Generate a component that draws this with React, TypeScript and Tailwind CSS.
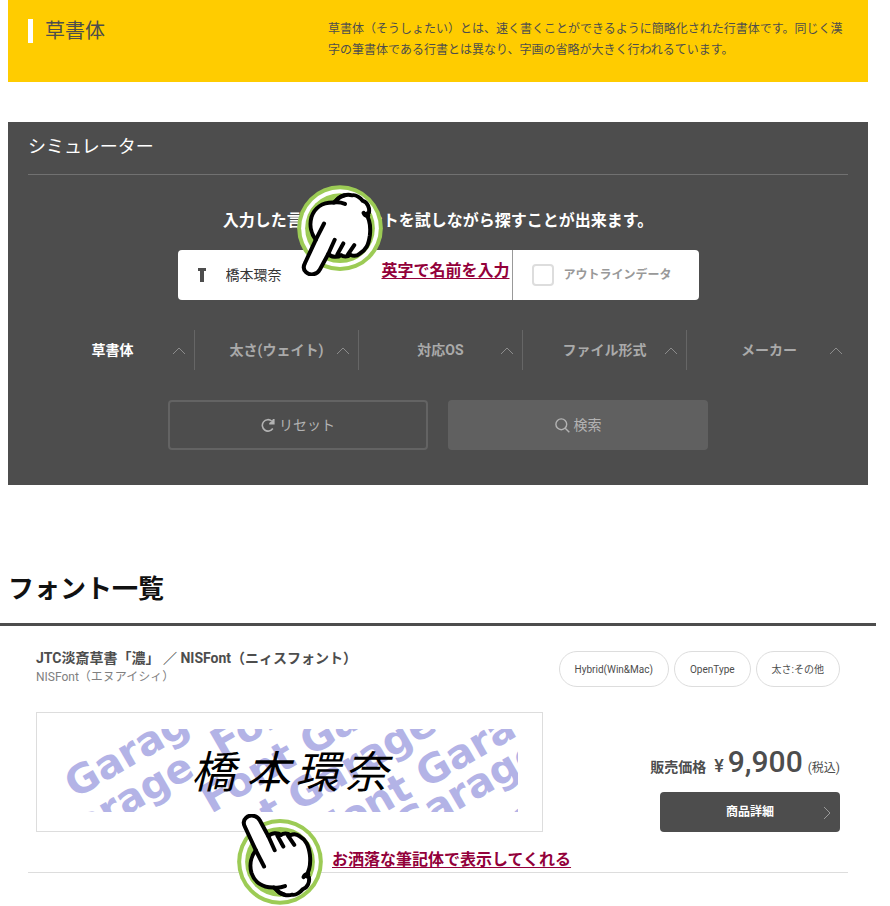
import { useState } from "react";

const filters = ["草書体", "太さ(ウェイト)", "対応OS", "ファイル形式", "メーカー"];
const tags = ["Hybrid(Win&Mac)", "OpenType", "太さ:その他"];

const watermarks = [
  { x: 10, y: 70, text: "Garag" },
  { x: -9, y: 127, text: "Garage" },
  { x: 156, y: 30, text: "Font" },
  { x: 146, y: 85, text: "Font Garage" },
  { x: 134, y: 140, text: "Font Garage" },
  { x: 262, y: 117, text: "Font Garage" },
  { x: 340, y: 112, text: "Garage" },
  { x: 336, y: 173, text: "Garage" },
];

function PointingHand({ className }: { className: string }) {
  return (
    <svg viewBox="0 0 258 274" className={className} fill="none" aria-hidden="true">
      <circle cx="129" cy="130" r="129" fill="#9ccb55" />
      <circle cx="129" cy="130" r="117" fill="#fff" />
      <circle cx="129" cy="130" r="105" fill="#9ccb55" />
      <g stroke="#000" strokeWidth="12" strokeLinecap="round" strokeLinejoin="round">
        <path
          fill="#fff"
          d="M56 165C43 148 36 122 43 97C52 70 75 52 110 53L119 45C130 31 151 26 166 31C176 28 191 39 198 48C212 52 219 69 216 84L207 87C217 101 222 123 219 151C215 181 207 196 188 207C179 215 168 214 160 210C152 217 139 217 132 211C122 219 102 218 94 207L68 255C60 271 38 273 27 263C19 256 18 245 24 234Z"
        />
        <path d="M81 116L56 165M113 165L94 207M139 176L121 209M172 181L153 209M110 53Q126 50 144 57M119 45Q128 34 142 32M200 84Q204 94 214 92" />
      </g>
    </svg>
  );
}

function ChevronUp() {
  return (
    <svg viewBox="0 0 14 8" className="absolute right-2 top-[17px] h-2 w-[14px]" fill="none" stroke="#8c8c8c" aria-hidden="true">
      <path d="M1 7L7 1L13 7" />
    </svg>
  );
}

export default function App() {
  const [name, setName] = useState("橋本環奈");
  const [active, setActive] = useState(0);

  return (
    <main className="min-h-[906px] bg-white pr-[14px] font-[Roboto,'Noto_Sans_CJK_JP',sans-serif] text-[#4d4d4d]">
      <section className="mx-2 flex h-[82px] justify-between bg-[#ffcc00] px-5 pt-[19px]">
        <h1 className="flex h-6 items-center gap-3 text-xl leading-6">
          <span className="h-6 w-[5px] bg-white" />
          草書体
        </h1>
        <p className="w-[520px] text-xs leading-[21px]">
          草書体（そうしょたい）とは、速く書くことができるように簡略化された行書体です。同じく漢字の筆書体である行書とは異なり、字画の省略が大きく行われるています。
        </p>
      </section>

      <section className="mx-2 mt-10 bg-[#4d4d4d] pb-[35px]">
        <h2 className="mx-5 h-[53px] border-b border-[#717171] pt-[13px] text-lg leading-6 text-white">シミュレーター</h2>
        <p className="pt-[34px] text-center text-base font-bold leading-6 text-white">
          <span className="relative">
            入力した言葉でフォントを試しながら探すことが出来ます。
            <PointingHand className="absolute left-[74px] top-[-26px] z-10 h-[91px] w-[86px]" />
          </span>
        </p>

        <div className="mx-auto mt-[17px] flex h-[50px] w-[521px] overflow-hidden rounded bg-white">
          <label className="relative flex w-[335px] items-center border-r border-[#999] pl-[19px]">
            <svg viewBox="0 0 10 14" className="h-[14px] w-[10px] shrink-0" fill="#4d4d4d" aria-hidden="true">
              <path d="M1 0H9V3H7V14H3V3H1Z" />
            </svg>
            <input
              aria-label="文字を入力"
              value={name}
              onChange={(e) => setName(e.target.value)}
              className="ml-[19px] w-[150px] text-sm text-[#333] outline-none"
            />
            <span className="absolute right-[2px] top-[9px] text-base font-bold leading-6 text-[#93003a] underline underline-offset-2">
              英字で名前を入力
            </span>
          </label>
          <label className="flex items-center gap-[10px] pl-[19px] text-xs font-bold text-[#999]">
            <input type="checkbox" className="h-[22px] w-[22px] appearance-none rounded border-2 border-[#ddd] bg-white checked:bg-[#ddd]" />
            アウトラインデータ
          </label>
        </div>

        <div className="mt-[30px] grid grid-cols-5 pl-[23px] pr-[17px]">
          {filters.map((label, i) => (
            <button
              key={label}
              type="button"
              onClick={() => setActive(i)}
              className={`relative h-10 border-[#666] text-sm font-bold ${i < 4 ? "border-r" : ""} ${i === active ? "text-white" : "text-[#aaa]"}`}
            >
              {label}
              <ChevronUp />
            </button>
          ))}
        </div>

        <div className="mt-[30px] flex justify-center gap-5 text-sm text-[#b3b3b3]">
          <button type="reset" className="flex h-[50px] w-[260px] items-center justify-center gap-1 rounded border-2 border-[#636363]">
            <svg viewBox="0 0 14 14" className="h-[14px] w-[14px]" fill="none" stroke="currentColor" strokeWidth="1.6" aria-hidden="true">
              <path d="M11.8 10.5A5.7 5.7 0 1 1 10.7 3" />
              <path d="M13.6 1V6.4H8.2V5L10.5 3.2L12 1Z" fill="currentColor" stroke="none" />
            </svg>
            リセット
          </button>
          <button type="submit" className="flex h-[50px] w-[260px] items-center justify-center gap-1 rounded bg-[#606060]">
            <svg viewBox="0 0 15 15" className="h-[15px] w-[15px]" fill="none" stroke="currentColor" strokeWidth="1.4" aria-hidden="true">
              <circle cx="6.3" cy="6.3" r="5.4" />
              <path d="M10.2 10.2L14.3 14.3" />
            </svg>
            検索
          </button>
        </div>
      </section>

      <section className="pt-[82px]">
        <h2 className="h-[56px] pl-2 pt-[6px] text-[26px] font-bold leading-8 text-[#111]">フォント一覧</h2>
        <div className="h-[3px] bg-[#4d4d4d]" />
        <article className="relative mx-7 h-[247px] border-b border-[#ddd] px-2 pt-[22px]">
          <div className="flex justify-between">
            <div>
              <h3 className="text-sm font-bold leading-5">JTC淡斎草書「濃」 ／ NISFont（ニィスフォント）</h3>
              <p className="text-xs leading-[18px] text-[#808080]">NISFont（エヌアイシィ）</p>
            </div>
            <ul className="mt-[3px] flex gap-[5px]">
              {tags.map((tag) => (
                <li key={tag} className="flex h-9 items-center rounded-full border border-[#ddd] px-[15px] text-[10px]">
                  {tag}
                </li>
              ))}
            </ul>
          </div>

          <div className="mt-[25px] flex justify-between">
            <div className="h-[120px] w-[507px] border border-[#ddd] pl-7 pt-4">
              <svg viewBox="0 0 453 83" className="h-[83px] w-[453px]">
                {watermarks.map((mark, i) => (
                  <text
                    key={i}
                    transform={`translate(${mark.x} ${mark.y}) rotate(-30)`}
                    className="fill-[#b3b3e6] font-['DejaVu_Sans',sans-serif] text-[40px] font-bold"
                  >
                    {mark.text}
                  </text>
                ))}
                <text x="126 181 230 279" y="59" className="fill-black font-['Noto_Sans_CJK_JP',sans-serif] text-[44px] italic">
                  {name}
                </text>
              </svg>
            </div>
            <div className="flex flex-col items-end pt-[30px]">
              <p className="flex h-[50px] items-baseline font-bold">
                <span className="text-sm">販売価格</span>
                <span className="ml-2 text-lg font-medium">¥</span>
                <span className="ml-1 text-[30px] font-medium leading-10">9,900</span>
                <span className="ml-[5px] text-xs font-normal">(税込)</span>
              </p>
              <a href="#detail" className="relative flex h-10 w-[180px] items-center justify-center rounded-sm bg-[#4d4d4d] text-xs font-bold text-white">
                商品詳細
                <svg viewBox="0 0 8 14" className="absolute right-[9px] top-[14px] h-[14px] w-2" fill="none" stroke="#999" aria-hidden="true">
                  <path d="M1 1L7 7L1 13" />
                </svg>
              </a>
            </div>
          </div>

          <div className="absolute left-[209px] top-[188px] flex items-center gap-[9px]">
            <PointingHand className="h-[91px] w-[86px] -scale-y-100" />
            <span className="text-base font-bold leading-6 text-[#93003a] underline underline-offset-2">お洒落な筆記体で表示してくれる</span>
          </div>
        </article>
      </section>
    </main>
  );
}
